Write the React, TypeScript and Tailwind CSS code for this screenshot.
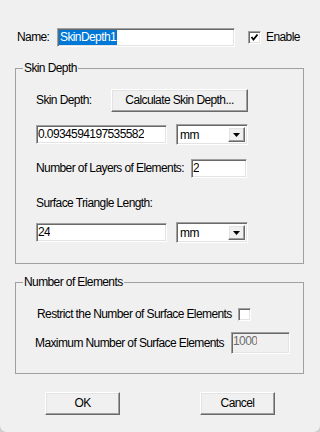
import React from "react";

const sunken =
  "border border-t-[#a0a0a0] border-l-[#a0a0a0] border-b-white border-r-white shadow-[inset_1px_1px_0_#696969,inset_-1px_-1px_0_#e3e3e3]";
const raised =
  "border border-t-white border-l-white border-b-[#696969] border-r-[#696969] shadow-[inset_-1px_-1px_0_#a0a0a0,inset_1px_1px_0_#e3e3e3] bg-[#f0f0f0]";

const TextField: React.FC<{ value: string; className?: string; disabled?: boolean }> = ({
  value,
  className = "",
  disabled,
}) => (
  <div
    className={`${sunken} flex items-center px-[1px] ${disabled ? "bg-[#f0f0f0] text-[#6d6d6d]" : "bg-white"} ${className}`}
  >
    <span className="whitespace-nowrap overflow-hidden">{value}</span>
  </div>
);

const Combo: React.FC<{ value: string }> = ({ value }) => (
  <div className={`${sunken} bg-white w-[72px] h-[21px] flex items-center pl-[3px] pr-[2px]`}>
    <span className="mt-[2px]">{value}</span>
    <div className={`${raised} ml-auto w-[17px] h-[15px] flex items-center justify-center`}>
      <svg width="7" height="4" viewBox="0 0 7 4">
        <path d="M0 0 H7 L3.5 4 Z" fill="#000" />
      </svg>
    </div>
  </div>
);

const CheckBox: React.FC<{ checked?: boolean }> = ({ checked }) => (
  <div className={`${sunken} bg-white w-[13px] h-[13px] flex items-center justify-center`}>
    {checked && (
      <svg width="9" height="9" viewBox="0 0 9 9">
        <path d="M1.5 4 L3.5 6.5 L7.5 1.5" stroke="#000" strokeWidth="1.8" fill="none" />
      </svg>
    )}
  </div>
);

const Button: React.FC<{ label: string; className?: string }> = ({ label, className = "" }) => (
  <button className={`${raised} h-[23px] flex items-center justify-center ${className}`}>
    {label}
  </button>
);

export default function App() {
  return (
    <div className="w-[320px] h-[432px] bg-[#cfcfcf]">
      <div className="w-[320px] h-[432px] bg-[#f0f0f0] rounded-b-[7px] flex flex-col pt-[28px] whitespace-nowrap text-black text-[12px] leading-[15px] tracking-[-0.6px] font-['Liberation_Sans',Arial,sans-serif]">
        {/* name row */}
        <div className="flex items-center h-[19px] pl-[17px]">
          <span className="w-[40px]">Name:</span>
          <div className={`${sunken} bg-white w-[178px] h-[19px] flex items-center pl-[1px]`}>
            <span className="bg-[#0078d7] text-white px-[1px]">SkinDepth1</span>
          </div>
          <div className="ml-[13px]">
            <CheckBox checked />
          </div>
          <span className="ml-[5px]">Enable</span>
        </div>

        {/* skin depth group */}
        <fieldset className="mt-[14px] ml-[15px] w-[289px] border border-[#a0a0a0]">
          <legend className="ml-[7px] px-[1px] leading-[15px]">Skin Depth</legend>
          <div className="flex flex-col pt-[13px] pb-[20px] pl-[20px]">
            <div className="flex items-center h-[23px]">
              <span className="w-[75px]">Skin Depth:</span>
              <Button label="Calculate Skin Depth..." className="w-[137px]" />
            </div>
            <div className="flex items-center h-[21px] mt-[12px]">
              <TextField value="0.0934594197535582" className="w-[131px] h-[19px]" />
              <div className="ml-[9px]">
                <Combo value="mm" />
              </div>
            </div>
            <div className="flex items-center h-[19px] mt-[14px]">
              <span className="w-[155px]">Number of Layers of Elements:</span>
              <TextField value="2" className="w-[56px] h-[19px]" />
            </div>
            <div className="mt-[18px] h-[15px]">Surface Triangle Length:</div>
            <div className="flex items-center h-[21px] mt-[11px]">
              <TextField value="24" className="w-[131px] h-[19px]" />
              <div className="ml-[9px]">
                <Combo value="mm" />
              </div>
            </div>
          </div>
        </fieldset>

        {/* number of elements group */}
        <fieldset className="mt-[11px] ml-[15px] w-[289px] border border-[#a0a0a0]">
          <legend className="ml-[7px] px-[1px] leading-[15px]">Number of Elements</legend>
          <div className="flex flex-col pt-[17px] pb-[19px]">
            <div className="flex items-center h-[15px] pl-[21px]">
              <span className="w-[201px]">Restrict the Number of Surface Elements</span>
              <CheckBox />
            </div>
            <div className="flex items-center h-[22px] mt-[10px] pl-[19px]">
              <span className="w-[196px]">Maximum Number of Surface Elements</span>
              <TextField value="1000" disabled className="w-[59px] h-[22px] items-start pt-[1px]" />
            </div>
          </div>
        </fieldset>

        {/* buttons */}
        <div className="flex mt-[18px] pl-[45px]">
          <Button label="OK" className="w-[75px]" />
          <Button label="Cancel" className="w-[75px] ml-[80px]" />
        </div>
      </div>
    </div>
  );
}
